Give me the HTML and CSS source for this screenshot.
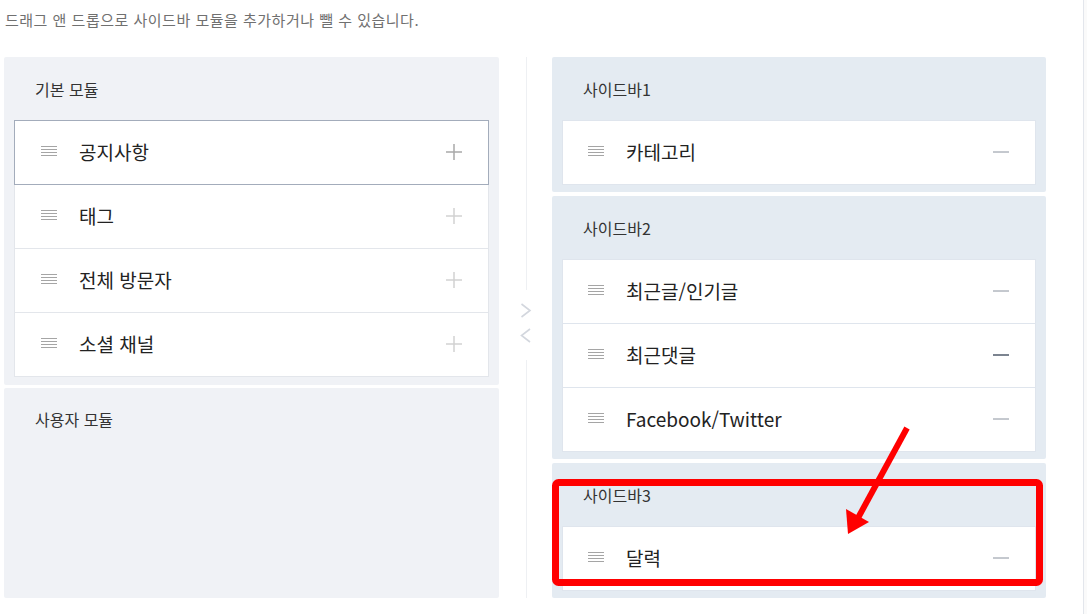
FILE: index.html
```html
<!DOCTYPE html>
<html lang="ko">
<head>
<meta charset="utf-8">
<link rel="stylesheet" href="styles.css">
</head>
<body>
<div class="page">
  <div class="main">
    <p class="intro">드래그 앤 드롭으로 사이드바 모듈을 추가하거나 뺄 수 있습니다.</p>
    <div class="board">
      <div class="col col-left">
        <section class="group group-base">
          <h3 class="group-title">기본 모듈</h3>
          <ul class="list">
            <li class="row active"><span class="handle"><svg width="16" height="11" viewBox="0 0 16 11"><path d="M0 0.5H16M0 3.5H16M0 6.5H16M0 9.5H16" stroke="#a5a5a5" stroke-width="1"/></svg></span><span class="label">공지사항</span><span class="act plus dark"><svg width="16" height="16" viewBox="0 0 16 16"><path d="M8 0V16M0 8H16" stroke="#a9a9a9" stroke-width="1.5"/></svg></span></li>
            <li class="row"><span class="handle"><svg width="16" height="11" viewBox="0 0 16 11"><path d="M0 0.5H16M0 3.5H16M0 6.5H16M0 9.5H16" stroke="#a5a5a5" stroke-width="1"/></svg></span><span class="label">태그</span><span class="act plus"><svg width="16" height="16" viewBox="0 0 16 16"><path d="M8 0V16M0 8H16" stroke="#d2d2d2" stroke-width="1.5"/></svg></span></li>
            <li class="row"><span class="handle"><svg width="16" height="11" viewBox="0 0 16 11"><path d="M0 0.5H16M0 3.5H16M0 6.5H16M0 9.5H16" stroke="#a5a5a5" stroke-width="1"/></svg></span><span class="label">전체 방문자</span><span class="act plus"><svg width="16" height="16" viewBox="0 0 16 16"><path d="M8 0V16M0 8H16" stroke="#d2d2d2" stroke-width="1.5"/></svg></span></li>
            <li class="row"><span class="handle"><svg width="16" height="11" viewBox="0 0 16 11"><path d="M0 0.5H16M0 3.5H16M0 6.5H16M0 9.5H16" stroke="#a5a5a5" stroke-width="1"/></svg></span><span class="label">소셜 채널</span><span class="act plus"><svg width="16" height="16" viewBox="0 0 16 16"><path d="M8 0V16M0 8H16" stroke="#d2d2d2" stroke-width="1.5"/></svg></span></li>
          </ul>
        </section>
        <section class="group group-user">
          <h3 class="group-title">사용자 모듈</h3>
        </section>
      </div>

      <div class="divider">
        <span class="vline top"></span>
        <span class="arrows">
          <svg width="12" height="40" viewBox="0 0 12 40"><path d="M1.5 1L10 7.5L1.5 14M10 26L1.5 32.5L10 39" fill="none" stroke="#d3d7de" stroke-width="1.6"/></svg>
        </span>
        <span class="vline bottom"></span>
      </div>

      <div class="col col-right">
        <section class="group group-side">
          <h3 class="group-title">사이드바1</h3>
          <ul class="list">
            <li class="row"><span class="handle"><svg width="16" height="11" viewBox="0 0 16 11"><path d="M0 0.5H16M0 3.5H16M0 6.5H16M0 9.5H16" stroke="#a5a5a5" stroke-width="1"/></svg></span><span class="label">카테고리</span><span class="act minus"><svg width="16" height="2" viewBox="0 0 16 2"><path d="M0 1H16" stroke="#8a929e" stroke-width="1"/></svg></span></li>
          </ul>
        </section>
        <section class="group group-side">
          <h3 class="group-title">사이드바2</h3>
          <ul class="list">
            <li class="row"><span class="handle"><svg width="16" height="11" viewBox="0 0 16 11"><path d="M0 0.5H16M0 3.5H16M0 6.5H16M0 9.5H16" stroke="#a5a5a5" stroke-width="1"/></svg></span><span class="label">최근글/인기글</span><span class="act minus"><svg width="16" height="2" viewBox="0 0 16 2"><path d="M0 1H16" stroke="#8a929e" stroke-width="1"/></svg></span></li>
            <li class="row"><span class="handle"><svg width="16" height="11" viewBox="0 0 16 11"><path d="M0 0.5H16M0 3.5H16M0 6.5H16M0 9.5H16" stroke="#a5a5a5" stroke-width="1"/></svg></span><span class="label">최근댓글</span><span class="act minus"><svg width="16" height="2" viewBox="0 0 16 2"><path d="M0 1H16" stroke="#7c8490" stroke-width="2"/></svg></span></li>
            <li class="row"><span class="handle"><svg width="16" height="11" viewBox="0 0 16 11"><path d="M0 0.5H16M0 3.5H16M0 6.5H16M0 9.5H16" stroke="#a5a5a5" stroke-width="1"/></svg></span><span class="label">Facebook/Twitter</span><span class="act minus"><svg width="16" height="2" viewBox="0 0 16 2"><path d="M0 1H16" stroke="#8a929e" stroke-width="1"/></svg></span></li>
          </ul>
        </section>
        <section class="group group-side last">
          <h3 class="group-title">사이드바3</h3>
          <ul class="list">
            <li class="row"><span class="handle"><svg width="16" height="11" viewBox="0 0 16 11"><path d="M0 0.5H16M0 3.5H16M0 6.5H16M0 9.5H16" stroke="#a5a5a5" stroke-width="1"/></svg></span><span class="label">달력</span><span class="act minus"><svg width="16" height="2" viewBox="0 0 16 2"><path d="M0 1H16" stroke="#8a929e" stroke-width="1"/></svg></span></li>
          </ul>
        </section>
      </div>
    </div>
  </div>
  <div class="edge"></div>

  <svg class="annot" width="1087" height="614" viewBox="0 0 1087 614">
    <rect x="555.5" y="482.5" width="484" height="100" rx="3" fill="none" stroke="#ff0000" stroke-width="7"/>
    <path d="M907 428L858 518" stroke="#ff0000" stroke-width="6" fill="none"/>
    <path d="M848 534L846 509L869 522Z" fill="#ff0000"/>
  </svg>
</div>
</body>
</html>
```

FILE: styles.css
```css
* { box-sizing: border-box; }

html, body {
  margin: 0;
  padding: 0;
  background: #ffffff;
}

body {
  font-family: "Noto Sans CJK KR", "Noto Sans", sans-serif;
  color: #222;
  overflow: hidden;
}

.page {
  position: relative;
  display: flex;
  width: 1087px;
  height: 614px;
}

.main {
  width: 1083px;
  padding-left: 4px;
}

.edge {
  flex: 1;
  border-left: 1px solid #e3e6ec;
  background: #fafafa;
}

.intro {
  margin: 10px 0 0 1px;
  font-size: 15px;
  line-height: 20px;
  color: #707070;
  letter-spacing: 0.5px;
}

.board {
  display: flex;
  margin-top: 27px;
  height: 541px;
}

.col {
  display: flex;
  flex-direction: column;
}

.col-left {
  width: 495px;
  gap: 3px;
}

.col-right {
  width: 494px;
  gap: 4px;
}

.group {
  border-radius: 2px;
  padding: 0 10px 8px;
}

.group-base {
  background: #f0f2f6;
}

.group-user {
  background: #f0f2f6;
  flex: 1;
}

.group-side {
  background: #e4ebf2;
  padding-bottom: 7px;
}

.group-side.last {
  flex: 1;
  padding-bottom: 0;
}

.group-title {
  margin: 0;
  padding: 20px 0 0 21px;
  height: 63px;
  font-size: 16px;
  line-height: 24px;
  font-weight: 400;
  color: #333;
}

.group-user .group-title {
  padding-top: 19px;
}

.list {
  list-style: none;
  margin: 0;
  padding: 0;
  background: #fff;
}

.row {
  display: flex;
  align-items: center;
  height: 65px;
  margin-top: -1px;
  padding: 0 26px 2px 26px;
  border: 1px solid #e3e6eb;
  background: #fff;
}

.row:first-child {
  margin-top: 0;
}

.group-side .row {
  border-color: #dfe5ed;
  padding-left: 25px;
}

.row.active {
  position: relative;
  border-color: #a3acbb;
  z-index: 1;
}

.handle {
  display: flex;
  width: 16px;
  margin-right: 22px;
}

.label {
  flex: 1;
  font-size: 19px;
  line-height: 26px;
  color: #222;
}

.act {
  display: flex;
  align-items: center;
  width: 16px;
}

.divider {
  width: 53px;
  display: flex;
  flex-direction: column;
  align-items: center;
  padding-left: 1px;
}

.vline {
  display: block;
  width: 1px;
  background: #eef0f3;
}

.vline.top {
  height: 233px;
}

.arrows {
  display: flex;
  padding: 13px 0 0 0;
  height: 70px;
}

.vline.bottom {
  flex: 1;
}

.annot {
  position: absolute;
  left: 0;
  top: 0;
  pointer-events: none;
}
```
